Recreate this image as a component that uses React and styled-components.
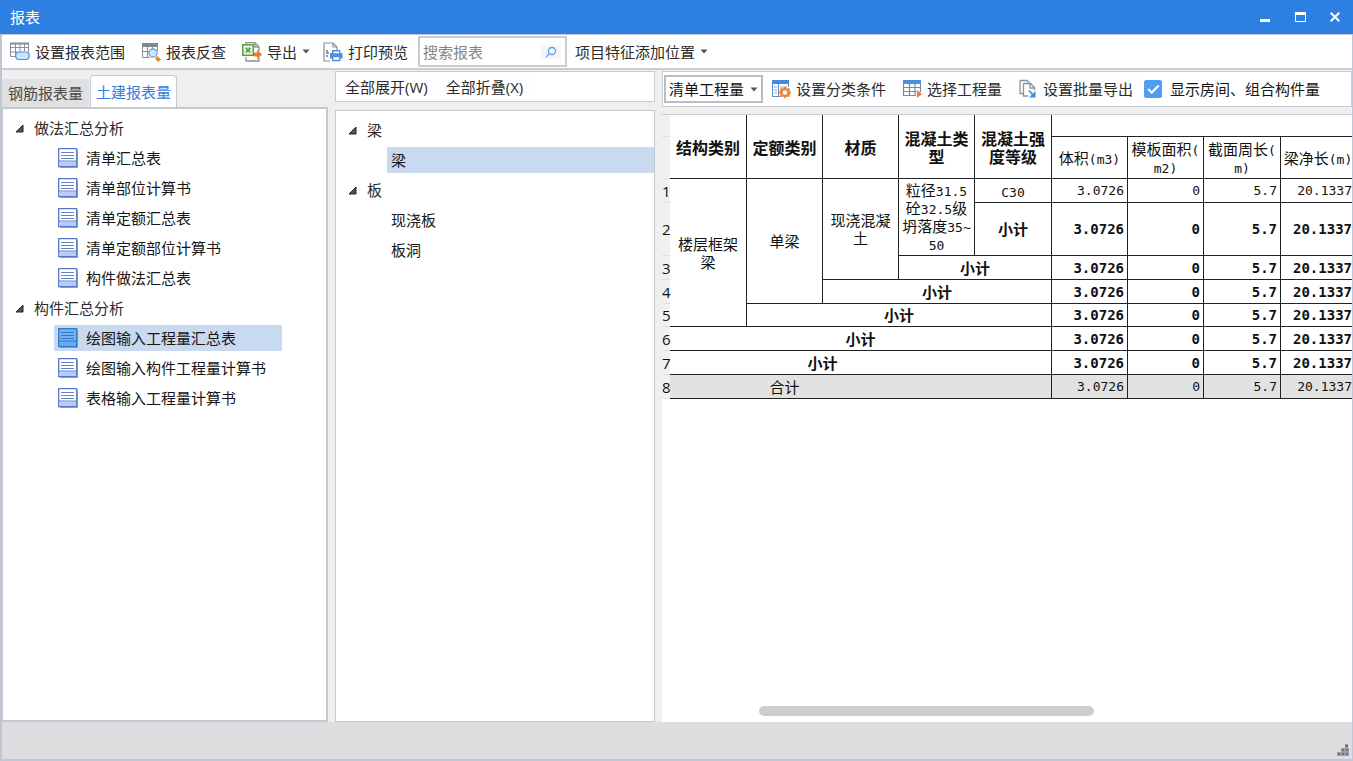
import React, { useState } from "react";
import styled, { createGlobalStyle, css } from "styled-components";

const uiFont = '"Open Sans", "Noto Sans CJK SC", sans-serif';
const cjkFont = '"Noto Sans CJK SC", sans-serif';
const monoFont = '"DejaVu Sans Mono", monospace';

const GlobalStyle = createGlobalStyle`
  *, *::before, *::after { box-sizing: border-box; }
  body { margin: 0; background: #efefef; }
  button, input, select { font: inherit; color: inherit; }
`;

const Window = styled.div`
  display: flex;
  flex-direction: column;
  min-height: 100vh;
  font: 15px/20px ${uiFont};
  color: #2b2b2b;
  background: #efefef;
`;

const TitleBar = styled.header`
  display: flex;
  align-items: center;
  justify-content: space-between;
  height: 34px;
  padding: 0 8px 0 10px;
  color: #fff;
  background: #2d80e2;
`;

const Title = styled.h1`
  margin: 0;
  font-size: 15px;
  font-weight: 400;
`;

const WindowControls = styled.div`
  display: flex;
  gap: 15px;
`;

const ControlButton = styled.button`
  display: grid;
  place-items: center;
  width: 20px;
  height: 20px;
  padding: 0;
  border: 0;
  background: none;
`;

const Frame = styled.div`
  display: flex;
  flex: 1;
  flex-direction: column;
  border: solid #c0c6d3;
  border-width: 1px 1px 2px 2px;
`;

const Toolbar = styled.nav`
  display: flex;
  align-items: center;
  gap: ${(p) => p.$gap || 0}px;
  height: ${(p) => p.$height}px;
  padding: ${(p) => p.$padding || "0"};
  background: #fff;
  border: 1px solid #c9cdd3;
  border-width: ${(p) => (p.$edge ? "0 0 2px" : "1px")};
`;

const ToolButton = styled.button`
  display: flex;
  flex: none;
  align-items: center;
  gap: 5px;
  height: 26px;
  padding: 0 ${(p) => (p.$menu ? 5 : 8)}px 0 8px;
  border: 0;
  border-radius: 3px;
  white-space: nowrap;
  background: #fefefe;
`;

const SearchBox = styled.label`
  display: flex;
  align-items: center;
  width: 149px;
  height: 31px;
  margin-left: 2px;
  padding: 0 4px 0 3px;
  border: 2px solid #c9cdd3;
`;

const SearchInput = styled.input`
  flex: 1;
  min-width: 0;
  padding: 0;
  border: 0;
  outline: 0;
  background: none;
  &::placeholder { color: #858585; opacity: 1; }
`;

const SearchButton = styled.button`
  display: grid;
  place-items: center;
  width: 20px;
  height: 14px;
  padding: 0;
  border: 0;
  background: #f5f5f5;
`;

const Workspace = styled.main`
  display: grid;
  flex: 1;
  grid-template-columns: 326px 320px minmax(0, 1fr);
  gap: 7px;
`;

const Column = styled.section`
  display: flex;
  flex-direction: column;
  min-width: 0;
  gap: ${(p) => p.$gap || 0}px;
  padding-top: ${(p) => p.$top || 0}px;
`;

const Tabs = styled.div`
  display: flex;
  align-items: flex-end;
  height: 37px;
`;

const Tab = styled.button`
  height: 28px;
  padding: 0 6px;
  border: 0;
  border-radius: 4px 4px 0 0;
  color: #4a4a4a;
  background: #e0e0e0;
  ${(p) =>
    p.$active &&
    css`
      height: 32px;
      margin-left: 1px;
      padding: 0 5px;
      border: 1px solid #c4c9d1;
      border-bottom: 0;
      color: #2d80e2;
      background: #fff;
    `}
`;

const TreePanel = styled.div`
  flex: 1;
  padding-top: 4px;
  background: #fff;
  border: ${(p) => p.$border}px solid #c4c9d0;
  border-left-width: 1px;
`;

const TreeList = styled.ul`
  margin: 0;
  padding: 0;
  list-style: none;
`;

const GroupButton = styled.button`
  display: flex;
  align-items: center;
  gap: 10px;
  height: 30px;
  padding: 0 12px;
  border: 0;
  background: none;
`;

const LeafItem = styled.li`
  padding: 2px ${(p) => p.$right}px 2px 51px;
`;

const LeafButton = styled.button`
  display: flex;
  align-items: center;
  gap: 8px;
  width: 100%;
  height: 26px;
  padding: 0 4px;
  border: 0;
  text-align: left;
  white-space: nowrap;
  color: #161616;
  background: ${(p) => (p.$selected ? "#c9d9f0" : "none")};
`;

const SelectBox = styled.label`
  display: grid;
  flex: none;
  align-items: center;
  width: 99px;
  height: 28px;
  border: 2px solid #b9bec6;
  & > * { grid-area: 1 / 1; }
  & > svg { justify-self: end; margin-right: 3px; pointer-events: none; }
`;

const Select = styled.select`
  width: 100%;
  padding: 0 14px 0 3px;
  border: 0;
  outline: 0;
  appearance: none;
  color: #111;
  background: none;
`;

const CheckLabel = styled.label`
  display: flex;
  flex: none;
  align-items: center;
  gap: 8px;
  margin-left: 3px;
  color: #161616;
  white-space: nowrap;
`;

const Checkbox = styled.input`
  display: grid;
  place-items: center;
  width: 18px;
  height: 18px;
  margin: 0;
  appearance: none;
  border: 1px solid #509df3;
  border-radius: 2px;
  &:checked { background: #509df3; }
  &:checked::before {
    content: "";
    width: 11px;
    height: 6px;
    margin-bottom: 3px;
    border: solid #fff;
    border-width: 0 0 2px 2px;
    transform: rotate(-45deg);
  }
`;

const ReportArea = styled.div`
  display: flex;
  flex: 1;
  flex-direction: column;
  justify-content: space-between;
  overflow: hidden;
  border-top: 1px solid #c9cdd3;
  background: #fff;
`;

const ReportTable = styled.table`
  width: 694px;
  table-layout: fixed;
  border-spacing: 0;
  color: #111;
  font: 15px/18px ${cjkFont};
`;

const HeadRow = styled.tr`
  height: ${(p) => p.$height}px;
`;

const BodyRow = styled.tr`
  height: ${(p) => p.$height}px;
  background: ${(p) => (p.$total ? "#e2e2e2" : "#fff")};
`;

const line = css`
  border: solid #222;
  border-width: 0 1px 1px 0;
`;

const HeadCell = styled.th`
  ${line}
  padding: 0;
  font-size: ${(p) => (p.$sub ? 15 : 16)}px;
  font-weight: ${(p) => (p.$sub ? 400 : 700)};
`;

const LabelCell = styled.td`
  ${line}
  ${(p) => p.$open && "border-right: 0;"}
  padding: 0;
  text-align: center;
  font-weight: ${(p) => (p.$bold ? 700 : 400)};
`;

const NumberCell = styled.td`
  ${line}
  padding: 0 3px 0 0;
  text-align: right;
  font-family: ${monoFont};
  font-size: ${(p) => (p.$bold ? 14 : 13)}px;
  font-weight: ${(p) => (p.$bold ? 700 : 400)};
`;

const RowNumber = styled.th`
  padding: 0;
  border-bottom: 1px solid #e0e0e0;
  font-family: ${uiFont};
  font-weight: 400;
  background: #f1f1f1;
`;

const Mono = styled.span`
  font: 13px/1 ${monoFont};
`;

const ScrollTrack = styled.div`
  display: grid;
  grid-template-columns: 97fr 334fr 258fr;
  height: 16px;
`;

const ScrollThumb = styled.div`
  grid-column: 2;
  height: 10px;
  border-radius: 5px;
  background: #cdcdcd;
`;

const StatusBar = styled.footer`
  display: flex;
  align-items: flex-end;
  justify-content: flex-end;
  height: 37px;
  padding: 3px;
  background: #dddddf;
`;

const Caret = () => (
  <svg width="8" height="5" viewBox="0 0 8 5" aria-hidden="true">
    <path d="M0.5 0.5h7L4 4.5z" fill="#555" />
  </svg>
);

const Expander = () => (
  <svg width="9" height="9" viewBox="0 0 9 9" aria-hidden="true">
    <path d="M8 1v7H1z" fill="#555" stroke="#222" />
  </svg>
);

const Icon = ({ children }) => (
  <svg width="20" height="20" viewBox="0 0 20 20" fill="none" aria-hidden="true">
    {children}
  </svg>
);

const RangeIcon = () => (
  <Icon>
    <path d="M0.5 1v13.5H6M0.5 5.5h18M0.5 10H7M5.5 1v12M10 1v9M14.500 1v8M18.500 1v9" stroke="#87909a" />
    <path d="M0 1.500h19" stroke="#87909a" strokeWidth="2" />
    <rect x="5.700" y="10" width="13.500" height="7.500" rx="3.500" fill="#cfe4fb" stroke="#4d8fdc" strokeWidth="1.200" />
  </Icon>
);

const LookupIcon = () => (
  <Icon>
    <path d="M1 1h16v4H1z" fill="#7f8992" />
    <path d="M1.500 4v11.500H9M1.500 9.500h7M6.500 5v10M11.500 5v3M16.500 5v4" stroke="#87909a" />
    <circle cx="12" cy="11" r="4" fill="#d7e6fb" stroke="#6d9ee6" strokeWidth="1.300" />
    <path d="m14 16.500 2.500-2.500 3.500 3.500-3 2.500z" fill="#f58220" />
  </Icon>
);

const ExportIcon = () => (
  <Icon>
    <path d="M4 2V.7h9l4 4.300V9M4 15v4h13v-3M13 1v4h4" stroke="#8a9198" strokeWidth="1.300" />
    <rect x=".8" y="2.800" width="10.500" height="10.500" fill="#e7f3df" stroke="#59a33d" strokeWidth="1.500" />
    <path d="m3.800 5.800 4.500 4.500m0-4.500-4.500 4.500" stroke="#59a33d" strokeWidth="1.800" />
    <path d="M12 10.500h3V7.500l5 5-5 5v-3h-3z" fill="#f47b28" />
  </Icon>
);

const PrintIcon = () => (
  <Icon>
    <path d="M7 19H1V1h9l4 4v3M10 1v4h4" stroke="#8a9198" strokeWidth="1.200" />
    <path d="M3 9h2M3 11h3M3 14h2" stroke="#777" strokeWidth="1.500" />
    <path d="M7 11h12.500v5.500H7z" fill="#4d91df" />
    <path d="M9.700 8.700h7V12h-7zM9.700 14.500h7v4h-7z" fill="#fff" stroke="#4d91df" strokeWidth="1.400" />
  </Icon>
);

const ClassifyIcon = () => (
  <Icon>
    <path d="M1.500 4v13.500h8M7.500 4v13M17.500 4v4" stroke="#5b8bc4" />
    <path d="M1 1h17v4H1z" fill="#468bda" />
    <path d="M3 8h3M3 11h3M3 14h3M9 8h7M9 11h2" stroke="#94a8bf" />
    <path d="m14 7.500 1.800 1.900 2.600-.3.500 2.600 1.100 1.800-1.100 1.800-.5 2.600-2.600-.3-1.800 1.900-1.800-1.900-2.600.3-.5-2.600L8 13.500l1.100-1.800.5-2.600 2.600.3z" fill="#f58232" />
    <circle cx="14" cy="13.500" r="2.300" fill="#fff" />
  </Icon>
);

const ChooseIcon = () => (
  <Icon>
    <path d="M1.500 4v12.500H14M1.500 8.500h17M1.500 12.500h13M7.500 5v11.500M13 5v11.500M18.500 4v9" stroke="#708da9" strokeWidth="1.200" />
    <path d="M1 1h18v4H1z" fill="#4b90e2" />
    <path d="m15 11 5 4-5 4z" fill="#f47b28" />
  </Icon>
);

const BatchIcon = () => (
  <Icon>
    <path d="M5 14.500H2V1.500h7l2 2M5.500 4.500h7l4 4V11M5.500 4v13H10M12 5v4h4" stroke="#8b949c" strokeWidth="1.300" />
    <path d="m11 11.500 5 5.500" stroke="#438edc" strokeWidth="1.800" />
    <path d="M17.500 12v6.500H11z" fill="#438edc" />
  </Icon>
);

const ReportIcon = ({ active }) => (
  <Icon>
    <path d="M2 19.500h17.500V2" stroke="#a4a6ad" />
    <path d="M.7.700h18v18H.7z" fill={active ? "#73b1f1" : "#fff"} stroke={active ? "#2f79c9" : "#5878c4"} strokeWidth="1.300" />
    <path d="M1.500 13.500h16.500v4.500H1.500z" fill={active ? "#66a9ef" : "#b7cbfa"} />
    <path d="M1 13h17.500M3 4.500h13M3 7.500h13M3 10.500h13" stroke={active ? "#2f78ca" : "#6482c8"} />
  </Icon>
);

const reportGroups = [
  { name: "做法汇总分析", items: ["清单汇总表", "清单部位计算书", "清单定额汇总表", "清单定额部位计算书", "构件做法汇总表"] },
  { name: "构件汇总分析", items: ["绘图输入工程量汇总表", "绘图输入构件工程量计算书", "表格输入工程量计算书"] },
];

const memberGroups = [
  { name: "梁", items: ["梁"] },
  { name: "板", items: ["现浇板", "板洞"] },
];

const columnWidths = [8, 77, 76, 76, 76, 77, 76, 76, 77, 75];
const values = ["3.0726", "0", "5.7", "20.1337"];

const rows = [
  {
    height: 24,
    cells: [
      { text: <>楼层框架<br />梁</>, rowSpan: 5 },
      { text: "单梁", rowSpan: 4 },
      { text: <>现浇混凝<br />土</>, rowSpan: 3 },
      { text: <>粒径<Mono>31.5</Mono><br />砼<Mono>32.5</Mono>级<br />坍落度<Mono>35~</Mono><br /><Mono>50</Mono></>, rowSpan: 2 },
      { text: <Mono>C30</Mono> },
    ],
  },
  { height: 53, bold: true, cells: [{ text: "小计" }] },
  { height: 24, bold: true, cells: [{ text: "小计", colSpan: 2 }] },
  { height: 24, bold: true, cells: [{ text: "小计", colSpan: 3 }] },
  { height: 23, bold: true, cells: [{ text: "小计", colSpan: 4 }] },
  { height: 24, bold: true, cells: [{ text: "小计", colSpan: 5 }] },
  { height: 24, bold: true, cells: [{ text: "小计", colSpan: 4, open: true }, { text: "" }] },
  { height: 24, total: true, cells: [{ text: "合计", colSpan: 3, open: true }, { text: "", colSpan: 2 }] },
];

function Tree({ groups, selected, onSelect, right, icons }) {
  return (
    <TreeList>
      {groups.map((group) => (
        <li key={group.name}>
          <GroupButton type="button" aria-expanded="true"><Expander />{group.name}</GroupButton>
          <TreeList>
            {group.items.map((item) => (
              <LeafItem key={item} $right={right}>
                <LeafButton type="button" $selected={item === selected} onClick={() => onSelect(item)}>
                  {icons && <ReportIcon active={item === selected} />}
                  {item}
                </LeafButton>
              </LeafItem>
            ))}
          </TreeList>
        </li>
      ))}
    </TreeList>
  );
}

function Report() {
  return (
    <ReportTable>
      <colgroup>{columnWidths.map((width, i) => <col key={i} width={width} />)}</colgroup>
      <thead>
        <HeadRow $height={22}>
          <RowNumber />
          <HeadCell rowSpan={2}>结构类别</HeadCell>
          <HeadCell rowSpan={2}>定额类别</HeadCell>
          <HeadCell rowSpan={2}>材质</HeadCell>
          <HeadCell rowSpan={2}>混凝土类<br />型</HeadCell>
          <HeadCell rowSpan={2}>混凝土强<br />度等级</HeadCell>
          <HeadCell colSpan={4} />
        </HeadRow>
        <HeadRow $height={42}>
          <RowNumber />
          <HeadCell $sub>体积<Mono>(m3)</Mono></HeadCell>
          <HeadCell $sub>模板面积<Mono>(<br />m2)</Mono></HeadCell>
          <HeadCell $sub>截面周长<Mono>(<br />m)</Mono></HeadCell>
          <HeadCell $sub>梁净长<Mono>(m)</Mono></HeadCell>
        </HeadRow>
      </thead>
      <tbody>
        {rows.map((row, i) => (
          <BodyRow key={i} $height={row.height} $total={row.total}>
            <RowNumber scope="row">{i + 1}</RowNumber>
            {row.cells.map((cell, j) => (
              <LabelCell key={j} rowSpan={cell.rowSpan} colSpan={cell.colSpan} $open={cell.open} $bold={row.bold}>
                {cell.text}
              </LabelCell>
            ))}
            {values.map((value) => <NumberCell key={value} $bold={row.bold}>{value}</NumberCell>)}
          </BodyRow>
        ))}
      </tbody>
    </ReportTable>
  );
}

export default function App() {
  const [report, setReport] = useState("绘图输入工程量汇总表");
  const [member, setMember] = useState("梁");

  return (
    <Window>
      <GlobalStyle />
      <TitleBar>
        <Title>报表</Title>
        <WindowControls>
          <ControlButton type="button" aria-label="最小化">
            <svg width="10" height="10"><path d="M0 8.500h10" stroke="#fff" strokeWidth="3" /></svg>
          </ControlButton>
          <ControlButton type="button" aria-label="最大化">
            <svg width="11" height="10"><path d="M.5 1v8.500h10V1" fill="none" stroke="#fff" /><path d="M0 1.500h11" stroke="#fff" strokeWidth="3" /></svg>
          </ControlButton>
          <ControlButton type="button" aria-label="关闭">
            <svg width="10" height="10"><path d="m.7.700 8.600 8.600m0-8.600L.7 9.300" stroke="#fff" strokeWidth="2" /></svg>
          </ControlButton>
        </WindowControls>
      </TitleBar>
      <Frame>
        <Toolbar $height={35} $edge>
          <ToolButton type="button"><RangeIcon />设置报表范围</ToolButton>
          <ToolButton type="button"><LookupIcon />报表反查</ToolButton>
          <ToolButton type="button" $menu><ExportIcon />导出<Caret /></ToolButton>
          <ToolButton type="button"><PrintIcon />打印预览</ToolButton>
          <SearchBox>
            <SearchInput type="text" placeholder="搜索报表" aria-label="搜索报表" />
            <SearchButton type="button" aria-label="搜索">
              <svg width="12" height="12" fill="none" stroke="#5aa2e8" strokeWidth="1.300"><circle cx="7" cy="5" r="3.500" /><path d="M4.500 7.500 1 11" /></svg>
            </SearchButton>
          </SearchBox>
          <ToolButton type="button" $menu>项目特征添加位置<Caret /></ToolButton>
        </Toolbar>
        <Workspace>
          <Column>
            <Tabs>
              <Tab type="button">钢筋报表量</Tab>
              <Tab type="button" $active>土建报表量</Tab>
            </Tabs>
            <TreePanel $border={2}>
              <Tree groups={reportGroups} selected={report} onSelect={setReport} right={44} icons />
            </TreePanel>
          </Column>
          <Column $top={1} $gap={8}>
            <Toolbar $height={31} $padding="0 1px" $gap={2}>
              <ToolButton type="button">全部展开(W)</ToolButton>
              <ToolButton type="button">全部折叠(X)</ToolButton>
            </Toolbar>
            <TreePanel $border={1}>
              <Tree groups={memberGroups} selected={member} onSelect={setMember} right={0} />
            </TreePanel>
          </Column>
          <Column $top={1} $gap={7}>
            <Toolbar $height={36} $padding="0 1px">
              <SelectBox>
                <Select aria-label="工程量类型"><option>清单工程量</option></Select>
                <Caret />
              </SelectBox>
              <ToolButton type="button"><ClassifyIcon />设置分类条件</ToolButton>
              <ToolButton type="button"><ChooseIcon />选择工程量</ToolButton>
              <ToolButton type="button"><BatchIcon />设置批量导出</ToolButton>
              <CheckLabel><Checkbox type="checkbox" defaultChecked />显示房间、组合构件量</CheckLabel>
            </Toolbar>
            <ReportArea>
              <Report />
              <ScrollTrack><ScrollThumb /></ScrollTrack>
            </ReportArea>
          </Column>
        </Workspace>
        <StatusBar>
          <svg width="12" height="12" viewBox="0 0 12 12" aria-hidden="true">
            <path d="M8 0h3v4h1v8H0V8h4V4h4z" fill="#9a9ea5" />
            <path d="M8 1h3v2H8zM5 5h2v2H5zM9 5h2v2H9zM1 9h2v2H1zM5 9h2v2H5zM9 9h2v2H9z" fill="#6c727b" />
          </svg>
        </StatusBar>
      </Frame>
    </Window>
  );
}
